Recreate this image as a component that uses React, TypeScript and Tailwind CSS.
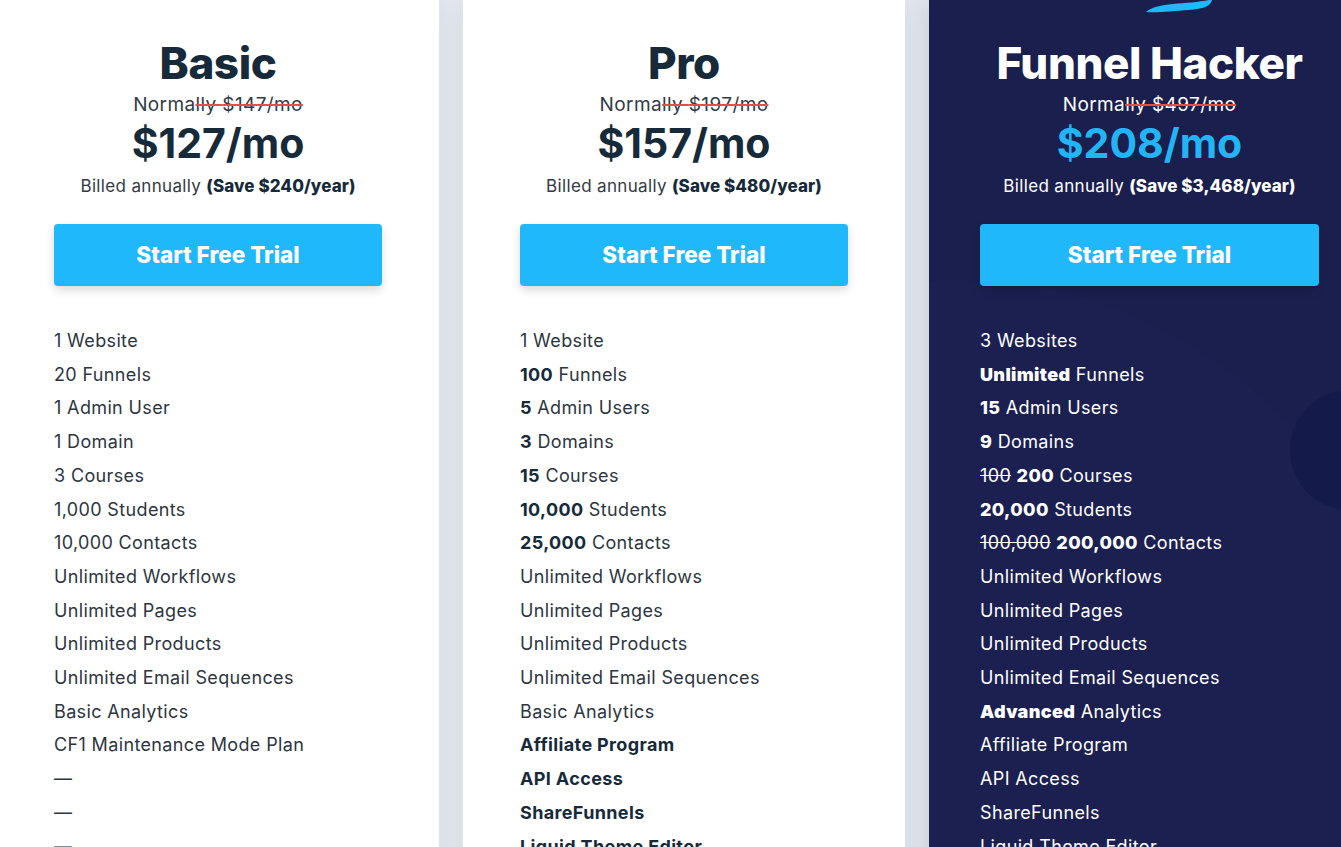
type Part = { t: string; b?: boolean; s?: boolean; x?: boolean };
type Row = Part[];

interface Plan {
  name: string;
  was: string;
  price: string;
  save: string;
  dark?: boolean;
  rows: Row[];
}

const p = (t: string): Row => [{ t }];

const plans: Plan[] = [
  {
    name: 'Basic',
    was: '$147/mo',
    price: '$127/mo',
    save: '(Save $240/year)',
    rows: [
      p('1 Website'),
      p('20 Funnels'),
      p('1 Admin User'),
      p('1 Domain'),
      p('3 Courses'),
      p('1,000 Students'),
      p('10,000 Contacts'),
      p('Unlimited Workflows'),
      p('Unlimited Pages'),
      p('Unlimited Products'),
      p('Unlimited Email Sequences'),
      p('Basic Analytics'),
      p('CF1 Maintenance Mode Plan'),
      p('—'),
      p('—'),
      p('—'),
    ],
  },
  {
    name: 'Pro',
    was: '$197/mo',
    price: '$157/mo',
    save: '(Save $480/year)',
    rows: [
      p('1 Website'),
      [{ t: '100', b: true }, { t: ' Funnels' }],
      [{ t: '5', b: true }, { t: ' Admin Users' }],
      [{ t: '3', b: true }, { t: ' Domains' }],
      [{ t: '15', b: true }, { t: ' Courses' }],
      [{ t: '10,000', b: true }, { t: ' Students' }],
      [{ t: '25,000', b: true }, { t: ' Contacts' }],
      p('Unlimited Workflows'),
      p('Unlimited Pages'),
      p('Unlimited Products'),
      p('Unlimited Email Sequences'),
      p('Basic Analytics'),
      [{ t: 'Affiliate Program', b: true }],
      [{ t: 'API Access', b: true }],
      [{ t: 'ShareFunnels', b: true }],
      [{ t: 'Liquid Theme Editor', b: true }],
    ],
  },
  {
    name: 'Funnel Hacker',
    was: '$497/mo',
    price: '$208/mo',
    save: '(Save $3,468/year)',
    dark: true,
    rows: [
      p('3 Websites'),
      [{ t: 'Unlimited', x: true }, { t: ' Funnels' }],
      [{ t: '15', b: true }, { t: ' Admin Users' }],
      [{ t: '9', b: true }, { t: ' Domains' }],
      [{ t: '100', s: true }, { t: ' ' }, { t: '200', b: true }, { t: ' Courses' }],
      [{ t: '20,000', b: true }, { t: ' Students' }],
      [{ t: '100,000', s: true }, { t: ' ' }, { t: '200,000', b: true }, { t: ' Contacts' }],
      p('Unlimited Workflows'),
      p('Unlimited Pages'),
      p('Unlimited Products'),
      p('Unlimited Email Sequences'),
      [{ t: 'Advanced', x: true }, { t: ' Analytics' }],
      p('Affiliate Program'),
      p('API Access'),
      p('ShareFunnels'),
      p('Liquid Theme Editor'),
    ],
  },
];

function Swoosh() {
  return (
    <svg className="absolute left-[214px] top-0" width="70" height="14" viewBox="0 0 70 14">
      <path d="M3 12 C 9 7, 18 5, 30 4 C 42 3, 56 2, 66 0 L 69 0 C 68 6, 60 9, 46 10 C 30 11, 14 13, 3 12 Z" fill="#1fb8fb" />
    </svg>
  );
}

function PlanCard({ plan }: { plan: Plan }) {
  const dark = plan.dark;
  return (
    <div
      className={
        dark
          ? 'relative shrink-0 w-[441px] bg-[#1a1f4d] px-[51px] overflow-hidden shadow-[0_0_24px_rgba(30,40,70,0.18)]'
          : 'relative shrink-0 w-[442px] bg-white px-[57px] shadow-[0_0_24px_rgba(30,40,70,0.08)]'
      }
    >
      {dark && (
        <>
          <div className="absolute left-[-420px] top-[280px] w-[900px] h-[900px] rounded-full bg-[#1b2050]" />
          <div className="absolute left-[361px] top-[390px] w-[150px] h-[120px] rounded-full bg-[#141a4a]" />
          <Swoosh />
        </>
      )}
      <div className="relative flex flex-col items-center text-center">
        <h2
          className={`mt-[39px] text-[44px] leading-[48px] font-extrabold tracking-[-0.01em] ${
            dark ? 'text-white' : 'text-[#172a3a]'
          }`}
        >
          {plan.name}
        </h2>
        <div
          className={`mt-[6px] text-[19px] leading-[24px] tracking-[0.02em] ${dark ? 'text-white' : 'text-[#323a45]'}`}
        >
          Norma
          <span className="line-through decoration-[#e0533d] decoration-[1.5px]">lly {plan.was}</span>
        </div>
        <div
          className={`mt-[2px] text-[41px] leading-[48px] font-bold ${dark ? 'text-[#22b5f6]' : 'text-[#172a3a]'}`}
        >
          {plan.price}
        </div>
        <div
          className={`mt-[6px] text-[17px] leading-[26px] tracking-[0.02em] ${dark ? 'text-white' : 'text-[#323a45]'}`}
        >
          Billed annually{' '}
          <span className={`font-extrabold tracking-[0.005em] ${dark ? 'text-white' : 'text-[#172a3a]'}`}>
            {plan.save}
          </span>
        </div>
        <button className="mt-[25px] w-full h-[62px] rounded-[4px] bg-[#1fb8fb] text-white text-[22.5px] font-extrabold shadow-[0_4px_10px_rgba(0,0,0,0.15)]">
          Start Free Trial
        </button>
      </div>
      <ul
        className={`relative mt-[38px] text-[18px] leading-[33.7px] tracking-[0.02em] ${
          dark ? 'text-white' : 'text-[#2d3541]'
        }`}
      >
        {plan.rows.map((row, i) => (
          <li key={i} className="whitespace-nowrap">
            {row.map((part, j) => (
              <span
                key={j}
                className={
                  part.x
                    ? 'font-black'
                    : part.b
                    ? dark
                      ? 'font-extrabold'
                      : 'font-bold text-[#172a3a]'
                    : part.s
                    ? 'line-through'
                    : ''
                }
              >
                {part.t}
              </span>
            ))}
          </li>
        ))}
      </ul>
    </div>
  );
}

export default function App() {
  return (
    <div className="h-screen overflow-hidden bg-[#e4e9f0] font-['Inter',sans-serif]">
      <div className="flex gap-[24px] ml-[-3px] h-[1000px]">
        {plans.map((plan) => (
          <PlanCard key={plan.name} plan={plan} />
        ))}
      </div>
    </div>
  );
}
